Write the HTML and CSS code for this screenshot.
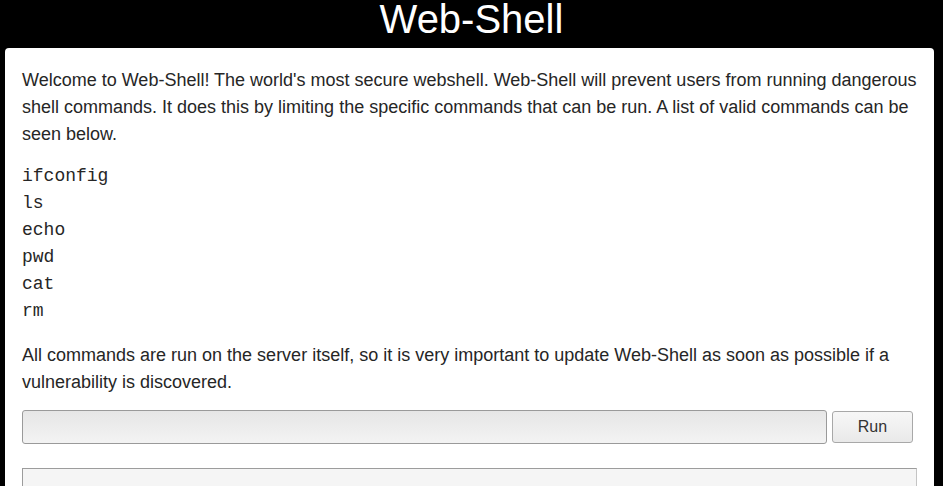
FILE: index.html
```html
<!DOCTYPE html>
<html>
<head>
<meta charset="utf-8">
<title>Web-Shell</title>
<link rel="stylesheet" href="styles.css">
</head>
<body>
<h1 class="title">Web-Shell</h1>
<main class="card">
  <p class="text intro">Welcome to Web-Shell! The world's most secure webshell. Web-Shell will prevent users from running dangerous shell commands. It does this by limiting the specific commands that can be run. A list of valid commands can be seen below.</p>
  <div class="commands">
    <div>ifconfig</div>
    <div>ls</div>
    <div>echo</div>
    <div>pwd</div>
    <div>cat</div>
    <div>rm</div>
  </div>
  <p class="text note">All commands are run on the server itself, so it is very important to update Web-Shell as soon as possible if a vulnerability is discovered.</p>
  <form class="run-form">
    <input class="cmd-input" type="text">
    <button class="run-btn" type="button">Run</button>
  </form>
  <div class="output"></div>
</main>
</body>
</html>
```

FILE: styles.css
```css
html, body {
  margin: 0;
  padding: 0;
  background: #000;
  overflow: hidden;
}
body {
  padding: 0 9px 0 5px;
  font-family: "Liberation Sans", Arial, sans-serif;
}
.title {
  margin: 0 0 10px 0;
  font-size: 40px;
  line-height: 38px;
  font-weight: normal;
  color: #fff;
  text-align: center;
  padding-left: 4px;
}
.card {
  background: #fff;
  border-radius: 4px;
  padding: 19px 17px 17px 17px;
  color: #262626;
  min-height: 600px;
}
.text {
  margin: 0;
  font-size: 18px;
  line-height: 27px;
}
.intro {
  margin-bottom: 15px;
}
.note {
  margin-bottom: 14px;
}
.commands {
  font-family: "Liberation Mono", "Courier New", monospace;
  font-size: 18px;
  line-height: 27px;
  margin: 0 0 17px 0;
}
.run-form {
  margin: 0 0 24px 0;
  display: flex;
  align-items: center;
  gap: 5px;
}
.cmd-input {
  box-sizing: border-box;
  width: 805px;
  height: 34px;
  margin: 0;
  border: 1px solid #9a9a9a;
  border-radius: 3px;
  background: linear-gradient(#e6e6e6, #f3f3f3);
}
.run-btn {
  box-sizing: border-box;
  width: 81px;
  height: 32px;
  margin: 0;
  border: 1px solid #a8a8a8;
  border-radius: 3px;
  background: linear-gradient(#f7f7f7, #e9e9e9);
  font-family: "Liberation Sans", Arial, sans-serif;
  font-size: 16px;
  color: #333;
}
.output {
  height: 100px;
  border: 1px solid #c4c4c4;
  border-top-color: #9c9c9c;
  border-left-color: #9c9c9c;
  background: #f5f5f5;
}
```
